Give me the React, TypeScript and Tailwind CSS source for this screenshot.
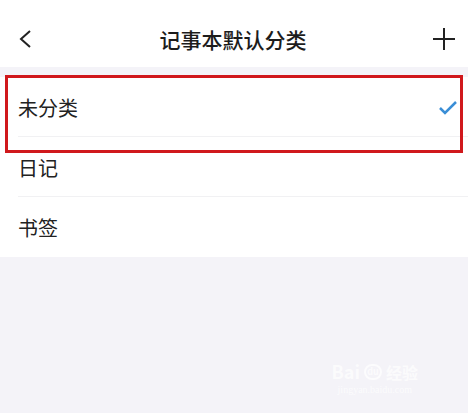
export default function App() {
  const rows = ["未分类", "日记", "书签"];
  return (
    <div
      className="relative w-[468px] h-[413px] bg-[#f4f3f8] overflow-hidden"
      style={{ fontFamily: '"Noto Sans CJK SC", "Noto Sans", sans-serif' }}
    >
      <header className="h-[67px] bg-white flex items-center justify-between px-[14px]">
        <svg width="18" height="20" viewBox="0 0 18 20" className="ml-[2px] mt-[10px]">
          <path d="M14 2 L5 10 L14 18" fill="none" stroke="#222" strokeWidth="2" />
        </svg>
        <div className="text-[21px] font-medium text-[#1c1c1c] mt-[12px]">记事本默认分类</div>
        <svg width="24" height="24" viewBox="0 0 24 24" className="mr-[-2px] mt-[10px]">
          <path d="M12 1 V23 M1 12 H23" stroke="#222" strokeWidth="2" />
        </svg>
      </header>
      <div className="h-[10px]" />
      <ul className="bg-white">
        {rows.map((r, i) => (
          <li key={r} className="h-[60px] pl-[18px] flex">
            <div
              className={`flex-1 flex items-center justify-between pr-[10px] text-[20px] text-[#222] ${
                i < rows.length - 1 ? "border-b border-[#f1f1f3]" : ""
              }`}
            >
              <span className="mt-[2px]">{r}</span>
              {i === 0 && (
                <svg width="20" height="16" viewBox="0 0 20 16" className="mt-[2px]">
                  <path d="M2 8 L7 13 L18 2" fill="none" stroke="#3a8ed6" strokeWidth="2.5" />
                </svg>
              )}
            </div>
          </li>
        ))}
      </ul>
      <div className="absolute left-[5px] top-[75px] w-[458px] h-[78px] border-[3px] border-[#d0181c]" />
      <div className="absolute right-[50px] bottom-[18px] flex flex-col items-center text-white/70 select-none">
        <div className="flex items-center gap-1 text-[18px] font-bold">
          <span>Bai</span>
          <span className="w-[18px] h-[16px] rounded-full border-2 border-white/70 text-[9px] leading-[12px] text-center">du</span>
          <span className="text-[16px]">经验</span>
        </div>
        <div className="text-[10px] leading-none" style={{ fontFamily: '"Liberation Serif", serif' }}>
          jingyan.baidu.com
        </div>
      </div>
    </div>
  );
}
